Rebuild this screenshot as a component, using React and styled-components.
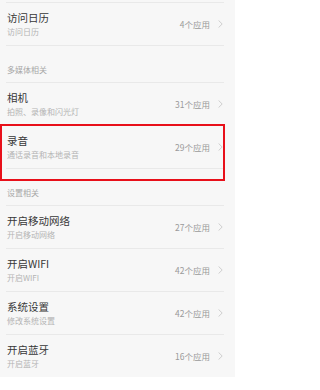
import React from "react";
import styled, { createGlobalStyle } from "styled-components";

const Global = createGlobalStyle`
  html, body { margin: 0; padding: 0; background: #ffffff; }
  body { font-family: "Noto Sans CJK SC", "Noto Sans", sans-serif; }
`;

const Page = styled.div`
  width: 235px;
  background: #f7f7f7;
  padding: 2px 11px 0 6px;
  box-sizing: border-box;
`;

const List = styled.div`
  border-top: 1px solid #e9e9e9;
  display: flex;
  flex-direction: column;
`;

const Row = styled.div`
  position: relative;
  height: ${(p) => (p.$last ? 42 : 43)}px;
  box-sizing: border-box;
  border-bottom: ${(p) => (p.$last ? "none" : "1px solid #e9e9e9")};
  display: flex;
  align-items: center;
  padding: 0 1px 0 1px;
`;

const Texts = styled.div`
  flex: 1;
  display: flex;
  flex-direction: column;
  gap: 3px;
  padding-top: 1px;
`;

const Title = styled.div`
  font-size: 10.5px;
  line-height: 12px;
  color: #383838;
`;

const Sub = styled.div`
  font-size: 8px;
  line-height: 10px;
  color: #b4b4b4;
`;

const Count = styled.div`
  font-size: 8.5px;
  color: #9a9a9a;
  margin-right: 8px;
`;

const Chevron = styled.svg`
  width: 5px;
  height: 8px;
  display: block;
`;

const Header = styled.div`
  height: 37px;
  box-sizing: border-box;
  border-bottom: 1px solid #e9e9e9;
  display: flex;
  align-items: flex-end;
  padding: 0 1px 7px;
  font-size: 8px;
  line-height: 10px;
  color: #a8a8a8;
`;

const Highlight = styled.div`
  position: absolute;
  top: -2px;
  left: -6px;
  right: -1px;
  bottom: -13px;
  border: 2px solid #e8101a;
  pointer-events: none;
`;

const Item = ({ title, sub, count, last, highlight }) => (
  <Row $last={last}>
    <Texts>
      <Title>{title}</Title>
      <Sub>{sub}</Sub>
    </Texts>
    <Count>{count}</Count>
    <Chevron viewBox="0 0 5 8">
      <path d="M0.6 0.5 L4.2 4 L0.6 7.5" fill="none" stroke="#c4c4c4" strokeWidth="0.8" />
    </Chevron>
    {highlight && <Highlight />}
  </Row>
);

export default function App() {
  return (
    <>
      <Global />
      <Page>
        <List>
          <Item title="访问日历" sub="访问日历" count="4个应用" />
          <Header>多媒体相关</Header>
          <Item title="相机" sub="拍照、录像和闪光灯" count="31个应用" />
          <Item title="录音" sub="通话录音和本地录音" count="29个应用" highlight />
          <Header>设置相关</Header>
          <Item title="开启移动网络" sub="开启移动网络" count="27个应用" />
          <Item title="开启WIFI" sub="开启WIFI" count="42个应用" />
          <Item title="系统设置" sub="修改系统设置" count="42个应用" />
          <Item title="开启蓝牙" sub="开启蓝牙" count="16个应用" last />
        </List>
      </Page>
    </>
  );
}
